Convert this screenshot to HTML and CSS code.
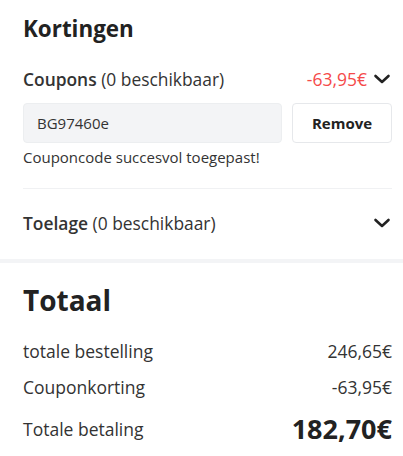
FILE: index.html
```html
<!DOCTYPE html>
<html lang="nl">
<head>
<meta charset="utf-8">
<link rel="stylesheet" href="styles.css">
</head>
<body>
<section class="discounts">
  <h2 class="title">Kortingen</h2>
  <div class="row coupons">
    <div class="label"><b>Coupons</b> (0 beschikbaar)</div>
    <div class="right">
      <span class="neg">-63,95€</span>
      <svg class="chev" width="18" height="18" viewBox="0 0 18 18"><path d="M2.5 6 L9 12 L15.5 6" fill="none" stroke="#222" stroke-width="2.6" stroke-linecap="round" stroke-linejoin="round"/></svg>
    </div>
  </div>
  <div class="coupon-form">
    <div class="code">BG97460e</div>
    <button class="remove">Remove</button>
  </div>
  <p class="success">Couponcode succesvol toegepast!</p>
  <div class="divider"></div>
  <div class="row allowance">
    <div class="label"><b>Toelage</b> (0 beschikbaar)</div>
    <svg class="chev" width="18" height="18" viewBox="0 0 18 18"><path d="M2.5 6 L9 12 L15.5 6" fill="none" stroke="#222" stroke-width="2.6" stroke-linecap="round" stroke-linejoin="round"/></svg>
  </div>
</section>
<div class="band"></div>
<section class="total">
  <h2 class="big">Totaal</h2>
  <div class="line first"><span>totale bestelling</span><span>246,65€</span></div>
  <div class="line"><span>Couponkorting</span><span>-63,95€</span></div>
  <div class="line final"><span>Totale betaling</span><span class="sum">182,70€</span></div>
</section>
</body>
</html>
```

FILE: styles.css
```css
* { box-sizing: border-box; }
html, body { margin: 0; padding: 0; background: #fff; }
body {
  font-family: "Open Sans", "Noto Sans", sans-serif;
  color: #222;
  width: 403px;
}
.discounts { padding: 14px 11px 24px 23px; }
.title {
  margin: 0;
  font-size: 22.4px;
  line-height: 30px;
  font-weight: 700;
  color: #222;
}
.row {
  display: flex;
  align-items: center;
  justify-content: space-between;
  font-size: 17.4px;
  line-height: 24px;
  height: 24px;
}
.row b { font-weight: 600; }
.label { color: #333; }
.coupons { margin-top: 23px; }
.right { display: flex; align-items: center; gap: 6px; }
.neg { color: #f54a4a; font-size: 17.5px; }
.chev { display: block; margin-right: 1px; }
.coupon-form {
  display: flex;
  gap: 10px;
  margin-top: 12px;
  height: 40px;
}
.code {
  flex: 1;
  background: #f3f4f6;
  border: 1px solid #eceef0;
  border-radius: 4px;
  padding: 0 13px;
  font-size: 15px;
  line-height: 38px;
  color: #333;
}
.remove {
  width: 100px;
  background: #fff;
  border: 1px solid #e6e8eb;
  border-radius: 4px;
  font-family: inherit;
  font-size: 15px;
  font-weight: 700;
  color: #222;
  padding: 0;
}
.success {
  margin: 4px 0 0;
  font-size: 15px;
  line-height: 20px;
  color: #333;
}
.divider {
  margin-top: 21px;
  height: 1px;
  background: #f0f1f3;
}
.allowance { margin-top: 22px; }
.band { height: 4px; background: #f3f4f6; }
.total { padding: 18px 11px 0 23px; }
.big {
  margin: 0;
  font-size: 28px;
  line-height: 38px;
  font-weight: 700;
  color: #222;
}
.line {
  display: flex;
  justify-content: space-between;
  align-items: center;
  font-size: 17.5px;
  line-height: 24px;
  color: #333;
  margin-top: 12px;
}
.line.first { margin-top: 20px; }
.final { margin-top: 12px; line-height: 36px; }
.sum { font-size: 27px; font-weight: 700; color: #222; }
```
